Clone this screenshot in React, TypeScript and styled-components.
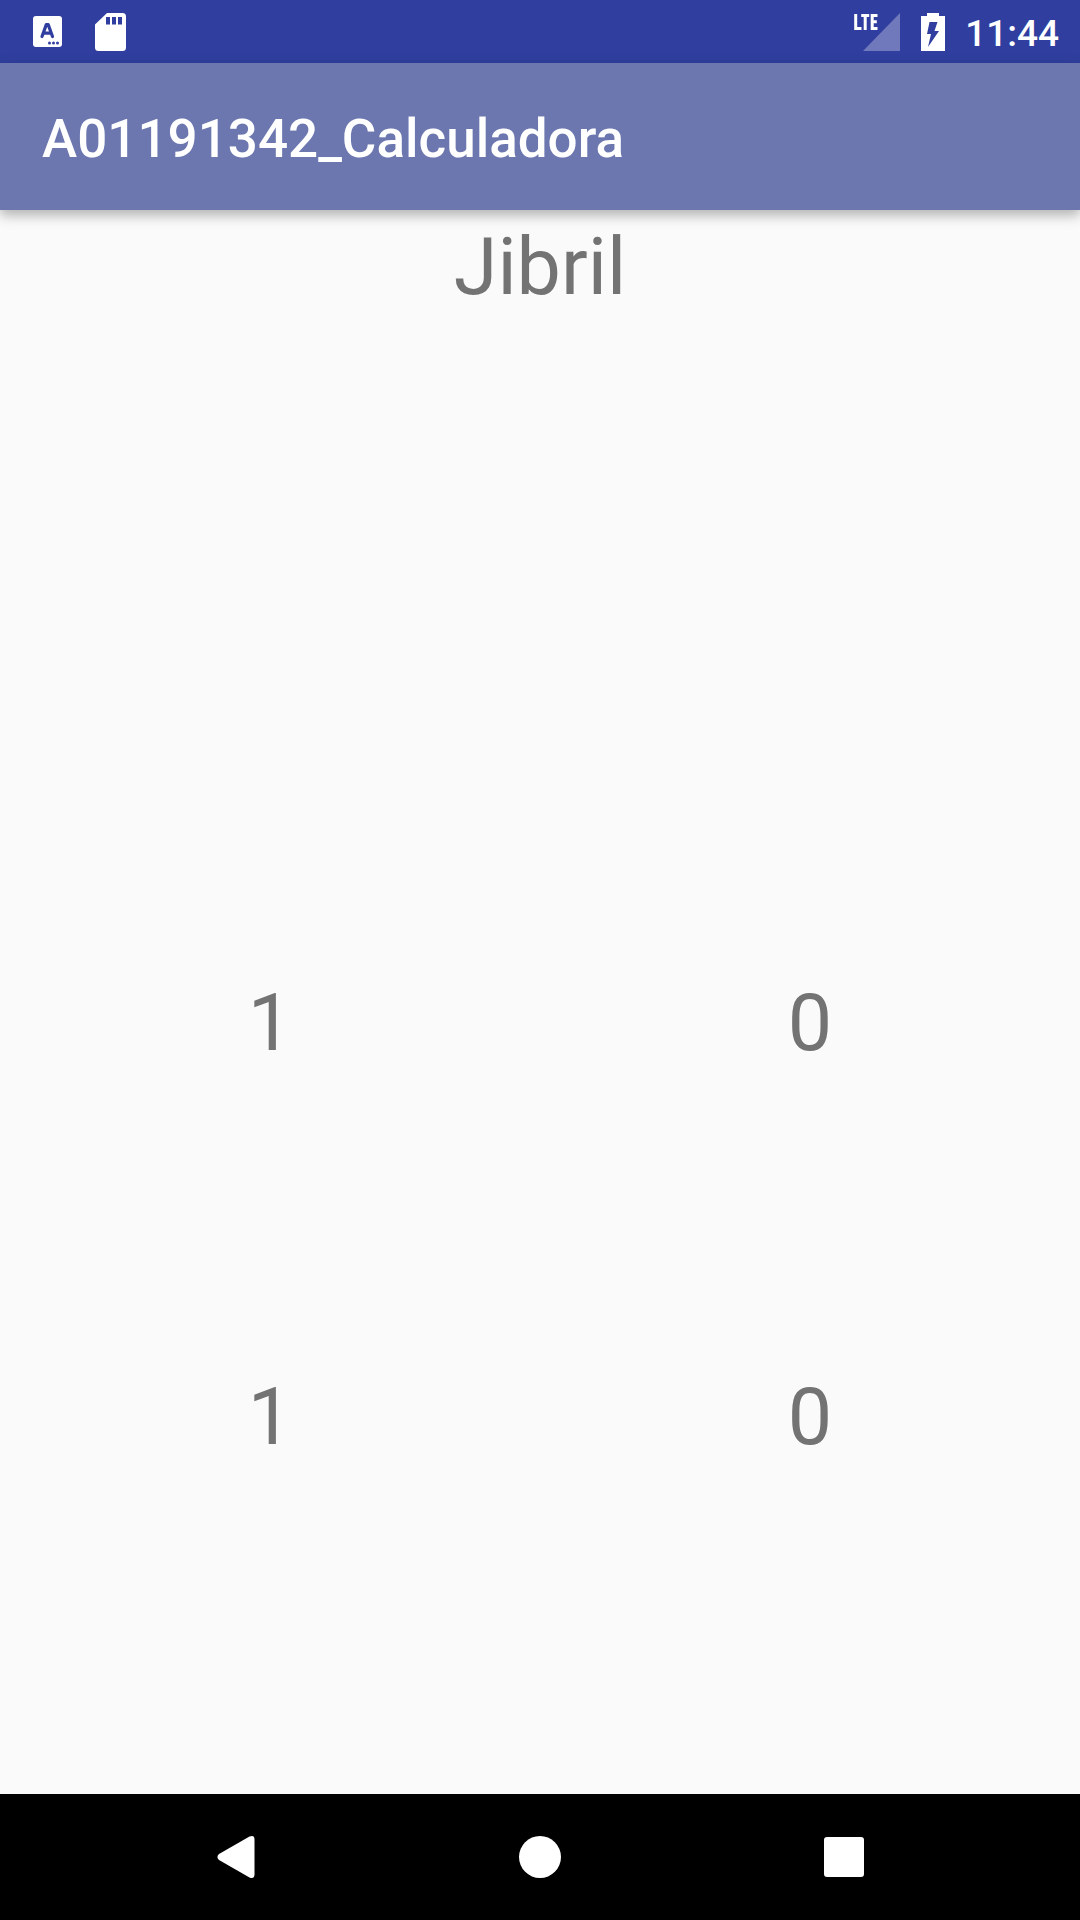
import React from "react";
import styled, { createGlobalStyle } from "styled-components";

const GlobalStyle = createGlobalStyle`
  * { box-sizing: border-box; }
  body {
    margin: 0;
    background: #fafafa;
    font-family: Roboto, "Noto Sans", sans-serif;
  }
`;

const Screen = styled.div`
  min-height: 100vh;
  display: flex;
  flex-direction: column;
`;

const StatusBar = styled.div`
  height: 63px;
  padding: 0 21px 0 32px;
  display: flex;
  align-items: center;
  justify-content: space-between;
  background: #303f9f;
  color: #fff;
`;

const StatusGroup = styled.div<{ $gap: number }>`
  display: flex;
  align-items: center;
  gap: ${(p) => p.$gap}px;
`;

const Icon = styled.svg`
  display: block;
  flex: none;
`;

const Clock = styled.time`
  padding-top: 4px;
  font-size: 37px;
  line-height: 44px;
  font-weight: 500;
`;

const AppBar = styled.header`
  position: relative;
  height: 147px;
  padding: 4px 42px 0;
  display: flex;
  align-items: center;
  background: #6c77af;
  box-shadow: 0 5px 12px rgba(0, 0, 0, 0.3);
`;

const Title = styled.h1`
  margin: 0;
  font-size: 53px;
  line-height: 62px;
  font-weight: 500;
  color: #fff;
`;

const Content = styled.main`
  flex: 1;
  display: grid;
  grid-template-rows: 756fr 394fr 434fr;
  color: #737373;
  font-size: 79px;
  line-height: 114px;
  text-align: center;
`;

const Name = styled.div``;

const Row = styled.div`
  display: grid;
  grid-template-columns: 1fr 1fr;
`;

const Value = styled.div``;

const NavBar = styled.nav`
  height: 126px;
  padding: 0 84px;
  display: grid;
  grid-template-columns: repeat(3, 1fr);
  background: #000;
`;

const NavButton = styled.button`
  border: 0;
  padding: 0;
  background: none;
  display: flex;
  align-items: center;
  justify-content: center;
`;

const rows = [
  [1, 0],
  [1, 0],
];

export default function App() {
  return (
    <Screen>
      <GlobalStyle />
      <StatusBar>
        <StatusGroup $gap={32}>
          <Icon width="31" height="33" viewBox="0 0 31 33" aria-hidden="true">
            <rect x="1" y="1" width="29" height="31" rx="3" fill="#fff" />
            <path
              d="M10 21.5 L14.3 9.6 H16.2 L20.5 21.5 M11.8 18.2 H18.8"
              fill="none"
              stroke="#303f9f"
              strokeWidth="3.2"
              strokeLinecap="round"
              strokeLinejoin="round"
            />
            <circle cx="17.5" cy="28" r="1.5" fill="#303f9f" />
            <circle cx="21.5" cy="28" r="1.5" fill="#303f9f" />
            <circle cx="25.5" cy="28" r="1.5" fill="#303f9f" />
          </Icon>
          <Icon width="31" height="38" viewBox="0 0 31 38" aria-hidden="true">
            <path
              d="M12 0 H27.5 Q31 0 31 3.5 V34.5 Q31 38 27.5 38 H3.5 Q0 38 0 34.5 V11.5 Z"
              fill="#fff"
            />
            <path d="M11 4 h4 v7.5 h-4z M17 4 h4 v7.5 h-4z M23 4 h4 v7.5 h-4z" fill="#303f9f" />
          </Icon>
        </StatusGroup>
        <StatusGroup $gap={20}>
          <Icon width="49" height="38" viewBox="0 0 49 38" role="img" aria-label="LTE">
            <path d="M48 0 V38 H11 Z" fill="#7079bc" />
            <path
              d="M3.7 1 V15.5 H9.5 M9.2 2.5 H17.2 M13.2 2.5 V17 M25.5 2.5 H20.2 V15.5 H25.5 M20.2 8.7 H24.8"
              fill="none"
              stroke="#fff"
              strokeWidth="3"
            />
          </Icon>
          <Icon width="24" height="38" viewBox="0 0 24 38" aria-hidden="true">
            <path d="M6 0 H18 V3 H24 V38 H0 V3 H6 Z" fill="#fff" />
            <path d="M8.500 9 H16.500 L13.500 18 H18 L7 34 L10 21 H6 Z" fill="#303f9f" />
          </Icon>
          <Clock>11:44</Clock>
        </StatusGroup>
      </StatusBar>
      <AppBar>
        <Title>A01191342_Calculadora</Title>
      </AppBar>
      <Content>
        <Name>Jibril</Name>
        {rows.map((values, r) => (
          <Row key={r}>
            {values.map((value, i) => (
              <Value key={i}>{value}</Value>
            ))}
          </Row>
        ))}
      </Content>
      <NavBar>
        <NavButton type="button" aria-label="Back">
          <Icon width="38" height="42" viewBox="0 0 38 42" aria-hidden="true">
            <path
              d="M32.5 0.6 Q37.500 -1.200 37.500 3.500 V38.500 Q37.500 43.200 32.500 41.400 L2 24 Q-1.200 21 2 18 Z"
              fill="#fff"
            />
          </Icon>
        </NavButton>
        <NavButton type="button" aria-label="Home">
          <Icon width="42" height="42" viewBox="0 0 42 42" aria-hidden="true">
            <circle cx="21" cy="21" r="21" fill="#fff" />
          </Icon>
        </NavButton>
        <NavButton type="button" aria-label="Overview">
          <Icon width="40" height="40" viewBox="0 0 40 40" aria-hidden="true">
            <rect width="40" height="40" rx="3" fill="#fff" />
          </Icon>
        </NavButton>
      </NavBar>
    </Screen>
  );
}
